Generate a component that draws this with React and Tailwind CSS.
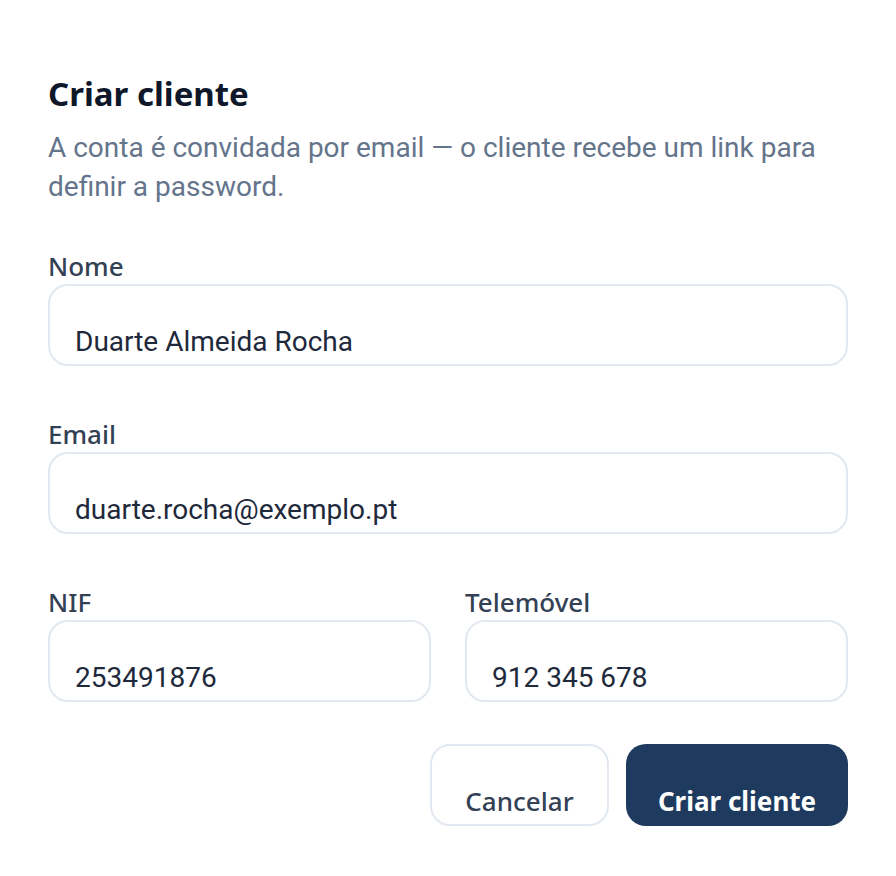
import { useState } from "react";

const Field = ({ label, value, onChange }) => (
  <label className="flex flex-col gap-[2px]">
    <span className="font-['Noto_Sans',sans-serif] text-[26px] font-medium leading-[32px] text-[#334155]">
      {label}
    </span>
    <input
      type="text"
      value={value}
      onChange={onChange}
      className="h-[82px] w-full rounded-[20px] border-2 border-[#e2e8f0] bg-white px-[25px] pt-[32px] pb-0 text-[28px] text-[#1e293b] outline-none"
    />
  </label>
);

const App = () => {
  const [form, setForm] = useState({
    nome: "Duarte Almeida Rocha",
    email: "duarte.rocha@exemplo.pt",
    nif: "253491876",
    tel: "912 345 678",
  });
  const set = (k) => (e) => setForm({ ...form, [k]: e.target.value });

  return (
    <div className="min-h-screen bg-white px-[48px] pt-[72px] font-['Roboto',sans-serif]">
      <h1 className="font-['Noto_Sans',sans-serif] text-[33px] font-bold leading-[44px] text-[#0f172a]">
        Criar cliente
      </h1>
      <p className="mt-[12px] text-[28px] leading-[39px] text-[#64748b]">
        A conta é convidada por email — o cliente recebe um link para definir a password.
      </p>
      <form className="mt-[44px] flex flex-col gap-[52px]">
        <Field label="Nome" value={form.nome} onChange={set("nome")} />
        <Field label="Email" value={form.email} onChange={set("email")} />
        <div className="grid grid-cols-2 gap-[34px]">
          <Field label="NIF" value={form.nif} onChange={set("nif")} />
          <Field label="Telemóvel" value={form.tel} onChange={set("tel")} />
        </div>
      </form>
      <div className="mt-[42px] flex justify-end gap-[17px] font-['Noto_Sans',sans-serif]">
        <button className="h-[82px] w-[179px] rounded-[20px] border-2 border-[#e2e8f0] bg-white pt-[32px] text-[26px] font-medium leading-[32px] text-[#334155]">
          Cancelar
        </button>
        <button className="h-[82px] w-[222px] rounded-[20px] bg-[#1e3a5f] pt-[32px] text-[26px] font-bold leading-[32px] text-white">
          Criar cliente
        </button>
      </div>
    </div>
  );
};

export default App;
